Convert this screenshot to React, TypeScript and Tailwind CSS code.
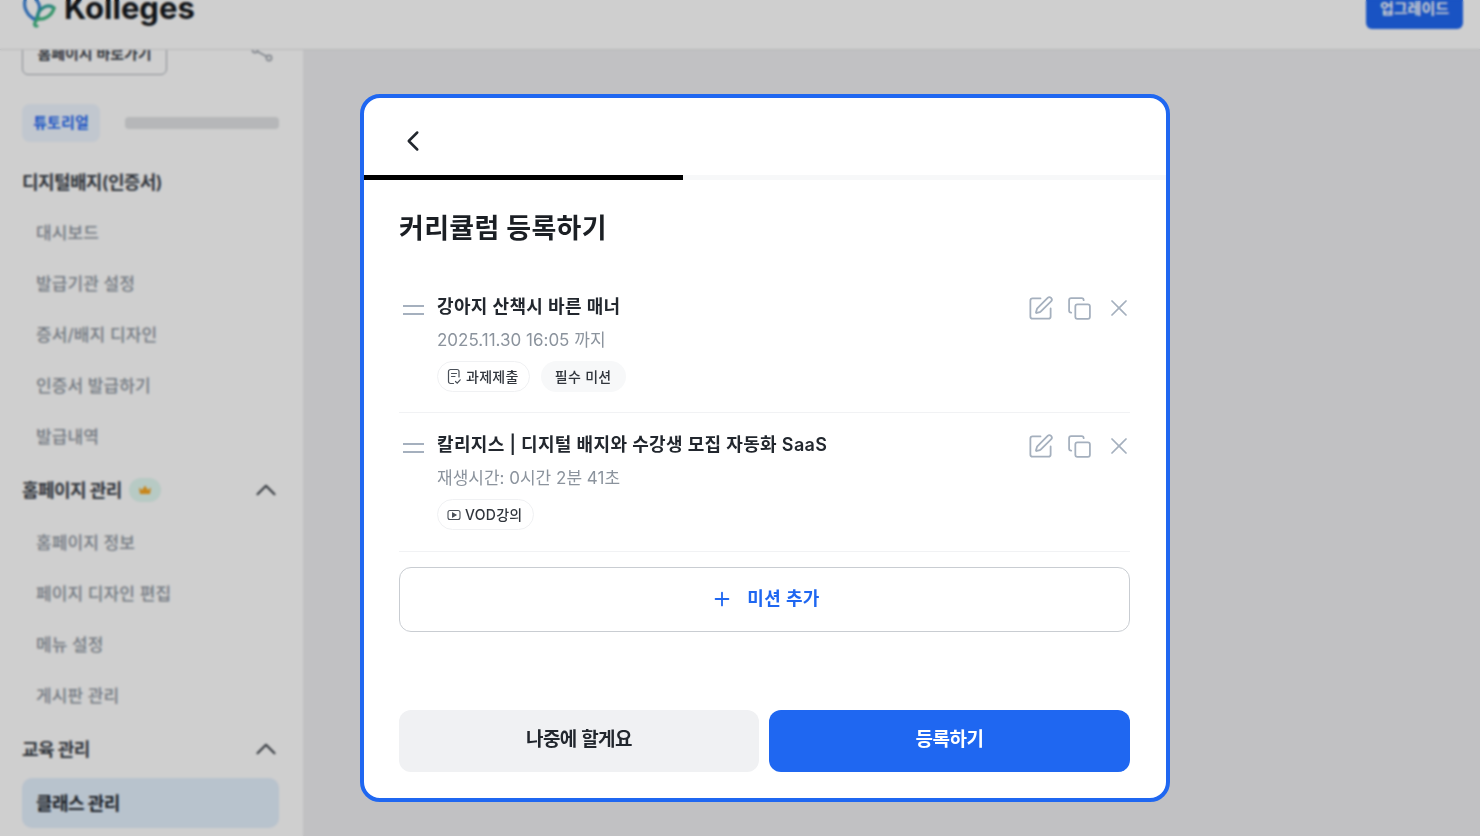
import { ChevronLeft, ChevronUp, Copy, Plus, SquarePen, X } from 'lucide-react';

const FONT = 'font-["Inter","Noto_Sans_CJK_KR",sans-serif]';

function NavItem({ label }: { label: string }) {
  return (
    <div className="flex h-[51px] items-center pl-[14px] text-[17px] font-medium tracking-[0.1px] text-[#8f97a1]">
      {label}
    </div>
  );
}

function NavHeading({ label, badge, open }: { label: string; badge?: boolean; open?: boolean }) {
  return (
    <div className="flex h-[52px] items-center justify-between text-[18px] font-semibold tracking-[-0.6px] text-[#3a4048]">
      <div className="flex items-center gap-[7px]">
        {label}
        {badge && (
          <span className="flex h-[24px] w-[32px] items-center justify-center rounded-full bg-[#e2f9f2]">
            <svg className="h-[10px] w-[14px]" viewBox="0 0 14 10" fill="#f5a623">
              <path d="M1 2.5 4 5 7 .5 10 5l3-2.5L12 9H2z" />
            </svg>
          </span>
        )}
      </div>
      {open && <ChevronUp className="-mr-[4px] h-[34px] w-[34px] text-[#3a4048]" strokeWidth={1.4} />}
    </div>
  );
}

function Sidebar() {
  return (
    <aside className="h-full w-[303px] shrink-0 overflow-hidden bg-white">
      <div className="-mt-[17px] pl-[22px] pr-[24px]">
        <div className="flex items-center justify-between pr-[4px]">
          <button className="h-[42px] w-[145px] rounded-[6px] border border-[#aab0b8] text-[15px] font-semibold tracking-[0px] text-[#3a4048]">
            홈페이지 바로가기
          </button>
          <svg className="-ml-[2px] mr-[1px] h-[24px] w-[24px] text-[#a0a6ae]" viewBox="0 0 24 24" fill="none" stroke="currentColor" strokeWidth="1.6">
            <circle cx="5" cy="8" r="2.6" />
            <circle cx="19" cy="16" r="2.6" />
            <path d="M7.5 9.5 16.5 14.5" />
          </svg>
        </div>
        <div className="mt-[29px] flex items-center gap-[25px]">
          <span className="flex h-[38px] w-[78px] items-center justify-center rounded-[8px] bg-[#eef6ff] text-[15px] font-semibold tracking-[0.1px] text-[#1f67f1]">
            튜토리얼
          </span>
          <div className="h-[12px] flex-1 rounded-[4px] bg-[#e0e2e4]" />
        </div>
        <div className="mt-[14px]">
          <NavHeading label="디지털배지(인증서)" />
          <NavItem label="대시보드" />
          <NavItem label="발급기관 설정" />
          <NavItem label="증서/배지 디자인" />
          <NavItem label="인증서 발급하기" />
          <NavItem label="발급내역" />
          <div className="mb-[2px] mt-[1px]">
            <NavHeading label="홈페이지 관리" badge open />
          </div>
          <NavItem label="홈페이지 정보" />
          <NavItem label="페이지 디자인 편집" />
          <NavItem label="메뉴 설정" />
          <NavItem label="게시판 관리" />
          <div className="mt-[1px]">
            <NavHeading label="교육 관리" open />
          </div>
          <div className="mt-[3px] flex h-[50px] items-center rounded-[10px] bg-[#e3f0fd] pl-[14px] text-[18px] font-semibold tracking-[-0.6px] text-[#22272e]">
            클래스 관리
          </div>
        </div>
      </div>
    </aside>
  );
}

function Logo() {
  return (
    <svg className="-mb-[1px] h-[34px] w-[34px]" viewBox="0 0 34 34" fill="none" strokeWidth="3.2" strokeLinecap="round">
      <path d="M4 2C0 10 5 20 14 24" stroke="#3b82d6" />
      <path d="M12 2C20 8 18 14 14 24" stroke="#3b82d6" />
      <path d="M15 22C16 12 26 7 32 12" stroke="#2fa39a" />
      <path d="M32 12C30 20 22 24 16 23" stroke="#42b883" />
      <path d="M17 22C12 26 11 30 15 30" stroke="#42b883" />
    </svg>
  );
}

function Header() {
  return (
    <header className="relative z-10 flex h-[50px] shrink-0 items-end justify-between border-b border-[#e2e3e5] bg-white pb-[20px] pl-[22px] pr-[17px]">
      <div className="flex items-end gap-[8px]">
        <Logo />
        <span className="mb-[6px] text-[31px] font-bold leading-none tracking-[0px] text-[#15181c]">Kolleges</span>
      </div>
      <button className="flex h-[40px] w-[97px] items-center justify-center rounded-[6px] bg-[#1f67f1] text-[15px] font-semibold tracking-[0px] text-white">
        업그레이드
      </button>
    </header>
  );
}

function RowActions() {
  return (
    <div className="-mr-[3px] flex items-center gap-[13px] text-[#a5b0be]">
      <SquarePen className="h-[27px] w-[27px]" strokeWidth={1.6} />
      <Copy className="h-[25px] w-[25px]" strokeWidth={1.7} />
      <X className="h-[28px] w-[28px]" strokeWidth={1.5} />
    </div>
  );
}

function DragHandle() {
  return (
    <div className="mt-[12px] flex w-[38px] shrink-0 flex-col gap-[6px] pl-[4px]">
      <span className="h-[2px] w-[21px] bg-[#a5b0be]" />
      <span className="h-[2px] w-[21px] bg-[#a5b0be]" />
    </div>
  );
}

function TaskIcon() {
  return (
    <svg className="h-[17px] w-[15px]" viewBox="0 0 15 17" fill="none" stroke="#4a5058" strokeWidth="1.2" strokeLinecap="round">
      <path d="M6.5 15.5H3.5A2 2 0 0 1 1.5 13.5V3.5A2 2 0 0 1 3.5 1.5H10A2 2 0 0 1 12 3.5V9" />
      <path d="M4.5 5.5h5M4.5 8.5h3.5" />
      <path d="M8.5 13.5l1.7 1.7 3-3.4" />
    </svg>
  );
}

function VodIcon() {
  return (
    <svg className="h-[14px] w-[14px]" viewBox="0 0 14 14" fill="none" stroke="#4a5058" strokeWidth="1.1">
      <rect x="1" y="2.5" width="12" height="9" rx="2" />
      <path d="M5.6 5v4l3.4-2z" fill="#4a5058" />
    </svg>
  );
}

function Tag({ children, filled }: { children: React.ReactNode; filled?: boolean }) {
  return (
    <span
      className={
        filled
          ? 'flex h-[31px] items-center rounded-full bg-[#f7f8f9] px-[14px] text-[14px] font-medium tracking-[0.3px] text-[#30353c]'
          : 'flex h-[31px] items-center gap-[4px] rounded-full border border-[#f0f1f3] pl-[9px] pr-[10px] text-[14px] font-medium tracking-[0.3px] text-[#30353c]'
      }
    >
      {children}
    </span>
  );
}

function CurriculumRow({
  title,
  meta,
  height,
  children,
}: {
  title: string;
  meta: string;
  height: string;
  children: React.ReactNode;
}) {
  return (
    <div className={`flex justify-between border-b border-[#f1f2f4] ${height}`}>
      <div className="flex">
        <DragHandle />
        <div>
          <div className="text-[18px] font-semibold leading-[28px] tracking-[0.33px] text-[#22272e]">{title}</div>
          <div className="mt-[7px] text-[17px] leading-[24px] tracking-[0px] text-[#8b939d]">{meta}</div>
          <div className="mt-[9px] flex gap-[11px]">{children}</div>
        </div>
      </div>
      <div className="pt-[1px]">
        <RowActions />
      </div>
    </div>
  );
}

function CurriculumModal() {
  return (
    <div className="absolute left-[360px] top-[94px] z-30 flex h-[708px] w-[810px] flex-col overflow-hidden rounded-[20px] border-[4px] border-[#1f67f1] bg-white">
      <div className="flex h-[77px] shrink-0 items-center pl-[32px] pt-[8px]">
        <ChevronLeft className="h-[34px] w-[34px] text-[#22272e]" strokeWidth={1.76} />
      </div>
      <div className="h-[5px] shrink-0 bg-[#f7f8f9]">
        <div className="h-full w-[319px] bg-black" />
      </div>
      <div className="flex flex-1 flex-col pb-[26px] pl-[35px] pr-[36px]">
        <h1 className="mt-[29px] text-[27px] font-bold leading-[40px] tracking-[0.3px] text-[#1b1f24]">커리큘럼 등록하기</h1>
        <div className="mt-[44px]">
          <CurriculumRow title="강아지 산책시 바른 매너" meta="2025.11.30 16:05 까지" height="h-[120px]">
            <Tag>
              <TaskIcon />
              과제제출
            </Tag>
            <Tag filled>필수 미션</Tag>
          </CurriculumRow>
          <div className="pt-[18px]">
            <CurriculumRow
              title="칼리지스 | 디지털 배지와 수강생 모집 자동화 SaaS"
              meta="재생시간: 0시간 2분 41초"
              height="h-[121px]"
            >
              <Tag>
                <VodIcon />
                VOD강의
              </Tag>
            </CurriculumRow>
          </div>
        </div>
        <button className="mt-[15px] flex h-[65px] items-center justify-center gap-[14px] rounded-[12px] border border-[#c9cdd2] pb-[2px] pl-[2px] text-[18px] font-semibold tracking-[0.3px] text-[#1f67f1]">
          <Plus className="h-[22px] w-[22px]" strokeWidth={2} />
          미션 추가
        </button>
        <div className="mt-auto flex gap-[10px]">
          <button className="h-[62px] w-[360px] rounded-[12px] bg-[#f0f1f3] pb-[1px] text-[19px] font-semibold tracking-[-0.5px] text-[#22272e]">
            나중에 할게요
          </button>
          <button className="h-[62px] flex-1 rounded-[12px] bg-[#1f67f1] pb-[1px] text-[19px] font-semibold tracking-[-0.5px] text-white">
            등록하기
          </button>
        </div>
      </div>
    </div>
  );
}

export default function App() {
  return (
    <div className={`relative flex h-[836px] w-[1480px] flex-col overflow-hidden bg-[#eeeef0] ${FONT}`}>
      <Header />
      <div className="flex min-h-0 flex-1">
        <Sidebar />
        <main className="flex-1" />
      </div>
      {/* dim layer behind the modal */}
      <div className="absolute inset-0 z-20 bg-black/[0.19] backdrop-blur-[1px]" />
      <CurriculumModal />
    </div>
  );
}
